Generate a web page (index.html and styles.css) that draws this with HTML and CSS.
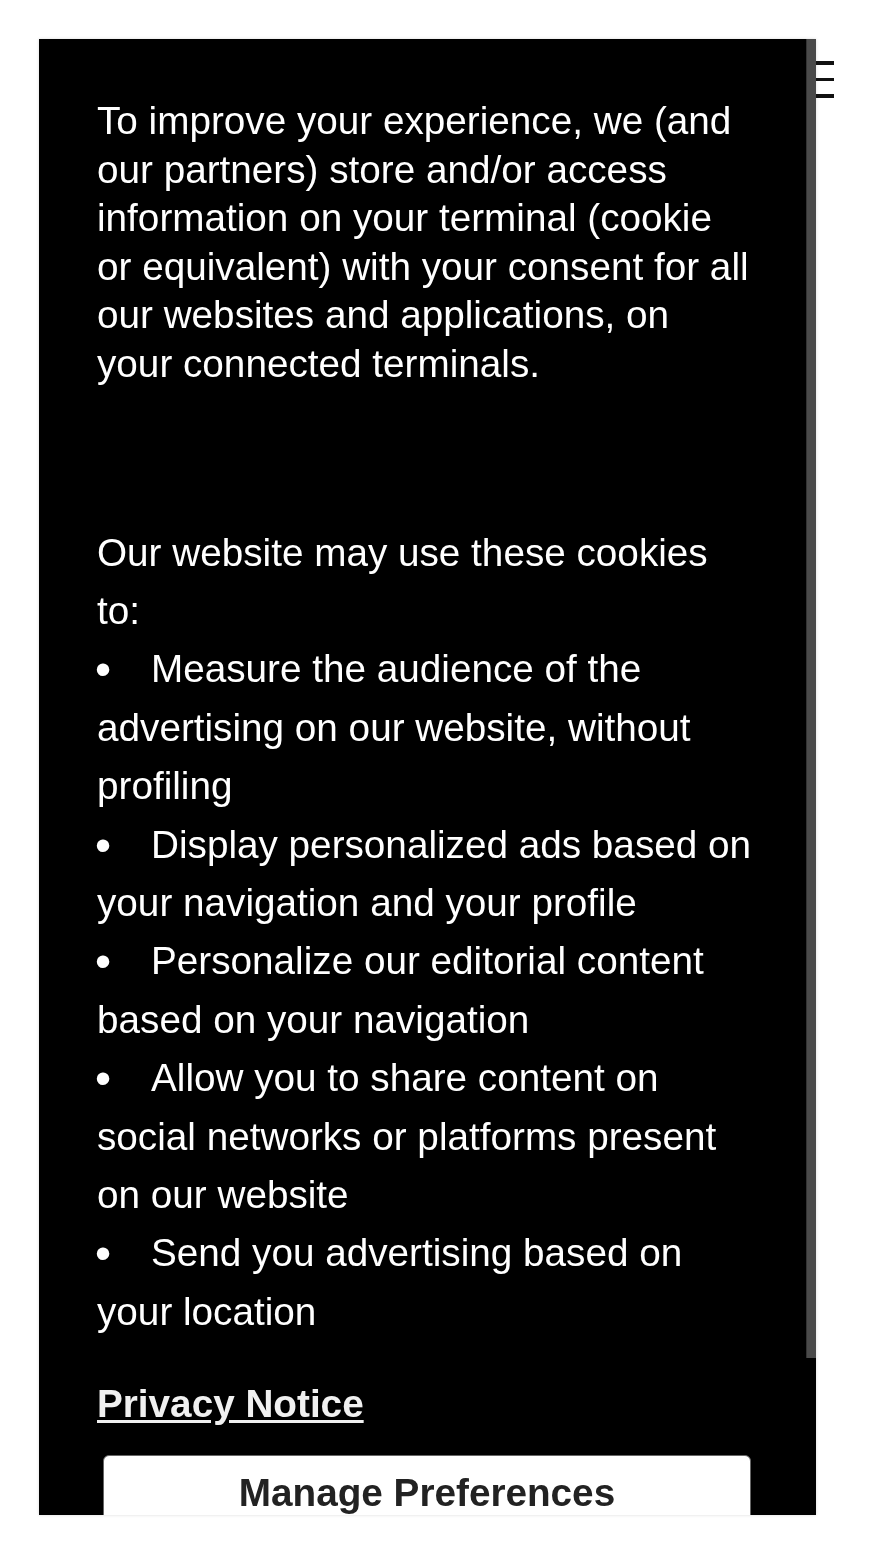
FILE: index.html
```html
<!DOCTYPE html>
<html>
<head>
  <link rel="stylesheet" href="styles.css">
</head>
<body>
  <header class="topbar">
    <button class="menu-toggle" aria-label="Menu">
      <span></span>
      <span></span>
      <span></span>
    </button>
  </header>

  <div class="cookie-dialog">
    <div class="cookie-body">
      <p class="intro">To improve your experience, we (and our partners) store and/or access information on your terminal (cookie or equivalent) with your consent for all our websites and applications, on your connected terminals.</p>

      <div class="purposes">
        <p>Our website may use these cookies to:</p>
        <p><span class="dot">&bull;</span>Measure the audience of the advertising on our website, without profiling</p>
        <p><span class="dot">&bull;</span>Display personalized ads based on your navigation and your profile</p>
        <p><span class="dot">&bull;</span>Personalize our editorial content based on your navigation</p>
        <p><span class="dot">&bull;</span>Allow you to share content on social networks or platforms present on our website</p>
        <p><span class="dot">&bull;</span>Send you advertising based on your location</p>
      </div>

      <a class="privacy-link" href="#">Privacy Notice</a>

      <button class="btn-manage">Manage Preferences</button>
    </div>
    <div class="scrollbar">
      <div class="scrollbar-thumb"></div>
    </div>
  </div>
</body>
</html>
```

FILE: styles.css
```css
body {
  margin: 0;
  background-color: #fff;
  font-family: "Liberation Sans", Arial, sans-serif;
}
.topbar {
  display: flex;
  justify-content: flex-end;
  padding: 61px 40px 0 0;
}
.menu-toggle {
  display: flex;
  flex-direction: column;
  gap: 13px;
  width: 26px;
  padding: 0;
  border: none;
  background: none;
}
.menu-toggle span {
  display: block;
  height: 3.5px;
  background-color: #111;
}
.cookie-dialog {
  position: fixed;
  top: 39px;
  left: 39px;
  width: 777px;
  height: 1476px;
  display: flex;
  overflow: hidden;
  background-color: #000;
  box-shadow: 0 0 3px rgba(0, 0, 0, 0.15);
}
.cookie-body {
  flex: 1;
  padding: 58px 53px 0 58px;
  color: #fff;
  font-size: 38.7px;
}
.cookie-body p {
  margin: 0;
}
.intro {
  line-height: 48.6px;
}
.purposes {
  margin-top: 135px;
  line-height: 58.4px;
}
.dot {
  display: inline-block;
  width: 56px;
  margin-left: -2px;
  font-size: 46px;
  line-height: 40px;
  vertical-align: -3px;
}
.privacy-link {
  display: block;
  margin-top: 39px;
  line-height: 48.6px;
  color: #f0f0f0;
  font-weight: bold;
  text-decoration: underline;
  text-underline-offset: 3px;
}
.btn-manage {
  display: block;
  width: 648px;
  margin: 26px 0 0 6px;
  padding: 15px 0 30px;
  border: 1px solid #666;
  border-radius: 6px;
  background-color: #fff;
  color: #222;
  font-family: inherit;
  font-size: 38.7px;
  font-weight: bold;
  text-align: center;
}
.scrollbar {
  width: 10px;
  background-color: #000;
}
.scrollbar-thumb {
  height: 1319px;
  background-color: #4a4a4a;
  border-left: 1px solid #333;
  box-sizing: border-box;
}
```
